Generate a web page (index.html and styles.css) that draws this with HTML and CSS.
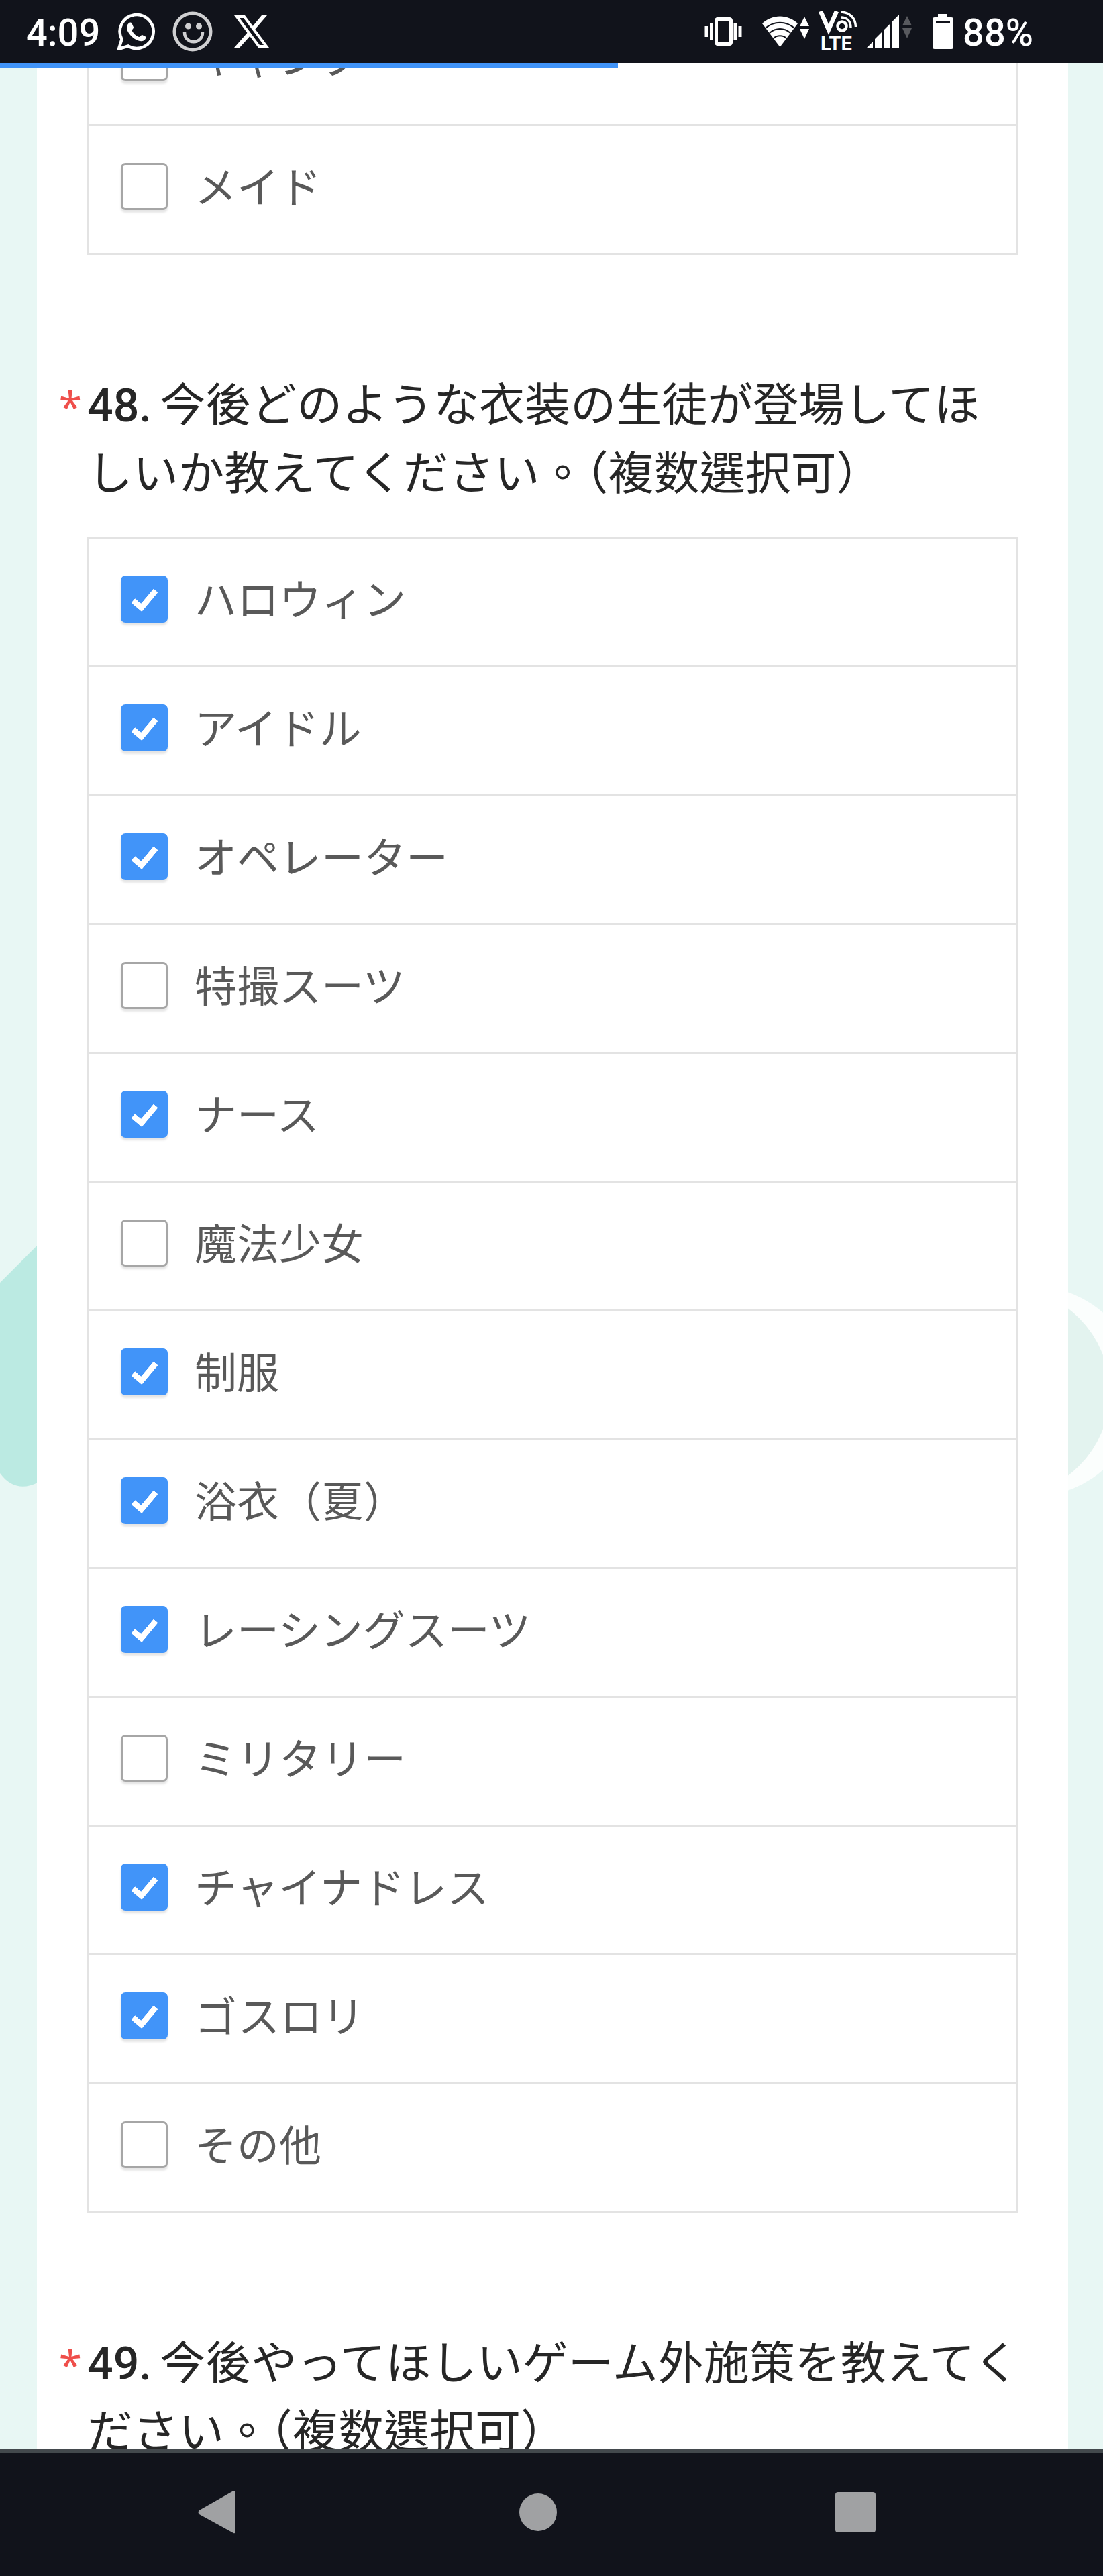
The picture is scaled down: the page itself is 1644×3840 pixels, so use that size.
FILE: index.html
```html
<!DOCTYPE html>
<html lang="ja">
<head>
  <meta charset="UTF-8" />
  <meta name="viewport" content="width=device-width, initial-scale=1.0"/>
  <title>アンケート</title>
  <link rel="stylesheet" href="styles.css">
</head>
<body>

  <header class="status-bar">
    <div class="status-left">
      <span class="clock">4:09</span>
      <svg class="icon-whatsapp" width="56" height="56" viewBox="0 0 56 56">
        <path d="M2 54 L6.500 39.500 A25 25 0 1 1 16 49.500 Z" fill="none" stroke="#fff" stroke-width="4.500"/>
        <path d="M18 15 C20 14 21.500 15 22 17 L24 21.500 C24.500 23 21.500 25.500 21.500 26.500 C24 31 27 34 32 36 C33.500 36.500 35.500 32.500 37 33 L42 35.500 C43 36.500 42 40 39 41.500 C34 43.500 27 40.500 22 36 C17 31 13.500 26 14 21 C14.500 17.500 16.500 15.500 18 15 Z" fill="#fff"/>
      </svg>
      <svg class="icon-smile" width="60" height="60" viewBox="0 0 60 60">
        <circle cx="30" cy="30" r="27" fill="none" stroke="#cfcfd1" stroke-width="5"/>
        <circle cx="23.500" cy="22" r="4.500" fill="#cfcfd1"/>
        <circle cx="39.500" cy="22" r="4.500" fill="#cfcfd1"/>
        <path d="M18 31 C18 50 45 50 45 31" fill="none" stroke="#cfcfd1" stroke-width="4.500"/>
      </svg>
      <svg class="icon-x" width="60" height="48" viewBox="0 0 60 48">
        <path d="M6 0 H22 L58 48 H42 Z M14 4 L44 44 H50 L20 4 Z" fill="#fff" fill-rule="evenodd"/>
        <path d="M47 0 H55 L36 22 L32 18 Z M6 48 H14 L32 28 L28 23 Z" fill="#fff"/>
      </svg>
    </div>
    <div class="status-right">
      <svg class="icon-vibrate" width="56" height="42" viewBox="0 0 56 42">
        <rect x="17.500" y="2.500" width="22" height="37" rx="2" fill="none" stroke="#fff" stroke-width="5"/>
        <path d="M3 13 V29 M10.500 8 V34 M46 8 V34 M53 13 V29" stroke="#fff" stroke-width="5"/>
      </svg>
      <svg class="icon-wifi" width="70" height="46" viewBox="0 0 70 46">
        <path d="M0 11 C15 -3 38 -3 53 11 L26.500 46 Z" fill="#fff"/>
        <path d="M5 18 C17 7 36 7 48 18 M11 25 C20 17 33 17 42 25 M17 33 C22 28 31 28 36 33" fill="none" stroke="#11131b" stroke-width="2"/>
        <path d="M63 1 L70 15 H56 Z M56 19 H70 L63 34 Z" fill="#fff"/>
      </svg>
      <svg class="icon-volte" width="58" height="62" viewBox="0 0 58 62">
        <path d="M3 1 L15 28 L27 1" fill="none" stroke="#fff" stroke-width="6.500"/>
        <circle cx="35" cy="23" r="6.500" fill="none" stroke="#fff" stroke-width="4.500"/>
        <path d="M33 10 C42 10 48 15 48 25 M34 2 C47 3 55 11 55.500 24" fill="none" stroke="#fff" stroke-width="3.500"/>
        <text class="lte" x="3" y="59">LTE</text>
      </svg>
      <svg class="icon-signal" width="68" height="50" viewBox="0 0 68 50">
        <path d="M0 49 L9 40 V49 Z M12 49 V36 L22 26 V49 Z M25 49 V23 L35 13 V49 Z M38 49 V10 L48 0 V49 Z" fill="#fff"/>
        <path d="M60 2 L67 16 H53 Z M53 20 H67 L60 35 Z" fill="#58595e"/>
      </svg>
      <svg class="icon-battery" width="31" height="52" viewBox="0 0 31 52">
        <path d="M8 0 H22 V5 H28 Q31 5 31 8 V49 Q31 52 28 52 H3 Q0 52 0 49 V8 Q0 5 3 5 H8 Z" fill="#fff"/>
        <rect x="5" y="11" width="21" height="3" fill="#11131b"/>
      </svg>
      <span class="battery-level">88%</span>
    </div>
  </header>

  <main class="page">
    <!-- background shapes at both sides of the sheet -->
    <svg class="shape shape-left" width="56" height="720" viewBox="0 0 56 720">
      <path d="M0 399 L56 343 V697 C36 707 16 705 0 683 Z" fill="#bbeae2"/>
    </svg>
    <svg class="shape shape-right" width="52" height="720" viewBox="0 0 52 720">
      <circle cx="-51" cy="561" r="156" fill="#fbfefd"/>
      <circle cx="-94" cy="562" r="156" fill="#e3f3ef"/>
    </svg>

    <div class="progress"><div class="progress-value" style="width: 56%"></div></div>

    <form class="sheet" lang="zh-Hant">
      <fieldset class="question question-scrolled">
        <div class="options">
          <label class="option"><input type="checkbox"><span>キャンプ</span></label>
          <label class="option"><input type="checkbox"><span>メイド</span></label>
        </div>
      </fieldset>

      <fieldset class="question">
        <legend class="title"><span class="required">*</span><b>48.</b>今後どのような衣装の生徒が登場してほ<br>しいか教えてください。（複数選択可）</legend>
        <div class="options">
          <label class="option"><input type="checkbox" checked><span>ハロウィン</span></label>
          <label class="option"><input type="checkbox" checked><span>アイドル</span></label>
          <label class="option"><input type="checkbox" checked><span>オペレーター</span></label>
          <label class="option"><input type="checkbox"><span>特撮スーツ</span></label>
          <label class="option"><input type="checkbox" checked><span>ナース</span></label>
          <label class="option"><input type="checkbox"><span>魔法少女</span></label>
          <label class="option"><input type="checkbox" checked><span>制服</span></label>
          <label class="option"><input type="checkbox" checked><span>浴衣（夏）</span></label>
          <label class="option"><input type="checkbox" checked><span>レーシングスーツ</span></label>
          <label class="option"><input type="checkbox"><span>ミリタリー</span></label>
          <label class="option"><input type="checkbox" checked><span>チャイナドレス</span></label>
          <label class="option"><input type="checkbox" checked><span>ゴスロリ</span></label>
          <label class="option"><input type="checkbox"><span>その他</span></label>
        </div>
      </fieldset>

      <fieldset class="question">
        <legend class="title"><span class="required">*</span><b>49.</b>今後やってほしいゲーム外施策を教えてください。（複数選択可）</legend>
      </fieldset>
    </form>
  </main>

  <nav class="nav-bar">
    <button type="button" aria-label="戻る">
      <svg width="64" height="64" viewBox="0 0 64 64"><path d="M57 0 Q60 0 60 3 V61 Q60 64 57 63 L6 35 Q3 32 6 29 Z" fill="#a0a1a3"/></svg>
    </button>
    <button type="button" aria-label="ホーム">
      <svg width="64" height="64" viewBox="0 0 64 64"><circle cx="35" cy="32" r="28" fill="#a0a1a3"/></svg>
    </button>
    <button type="button" aria-label="アプリ履歴">
      <svg width="64" height="64" viewBox="0 0 64 64"><rect x="2" y="2" width="60" height="60" rx="4" fill="#a0a1a3"/></svg>
    </button>
  </nav>

</body>
</html>
```
FILE: styles.css
```css
* {
  box-sizing: border-box;
  margin: 0;
  padding: 0;
}

body {
  display: flex;
  flex-direction: column;
  height: 100vh;
  overflow: hidden;
  background: #e8f7f4;
  font-family: Roboto, "Noto Sans CJK TC", sans-serif;
}

svg {
  display: block;
}

/* Status bar */
.status-bar {
  display: flex;
  flex-shrink: 0;
  justify-content: space-between;
  align-items: center;
  height: 94px;
  padding: 0 104px 0 39px;
  background: #11131b;
  color: #fff;
  font-size: 56px;
  font-weight: 500;
  line-height: 94px;
}

.status-left,
.status-right {
  display: flex;
  align-items: center;
}

.status-left {
  gap: 26px;
}

.clock {
  padding-top: 4px;
}

.status-right {
  gap: 14px;
}

.icon-vibrate {
  margin-right: 16px;
}

.icon-signal {
  margin-right: 16px;
}

.battery-level {
  padding-top: 4px;
}

.lte {
  font-size: 29px;
  font-weight: 700;
  fill: #fff;
}

/* Page */
.page {
  position: relative;
  flex: 1;
  min-height: 0;
  overflow: hidden;
}

.shape {
  position: absolute;
  top: 50%;
  transform: translateY(-50%);
}

.shape-left {
  left: 0;
}

.shape-right {
  right: 0;
}

.progress {
  position: absolute;
  top: 0;
  left: 0;
  right: 0;
  height: 8px;
  z-index: 1;
}

.progress-value {
  height: 8px;
  background: #4194f9;
}

.sheet {
  position: relative;
  min-height: 100%;
  margin: 0 52px 0 55px;
  padding: 0 75px;
  background: #fff;
}

.question {
  border: none;
  min-width: 0;
  margin-bottom: 174px;
}

.question-scrolled {
  margin-top: -101px;
}

.title {
  position: relative;
  width: calc(100% + 24px);
  margin-bottom: 42px;
  color: #262626;
  font-size: 68px;
  line-height: 102px;
}

.title b {
  margin-right: 12px;
  font-weight: 500;
}

.required {
  position: absolute;
  right: 100%;
  margin-right: 8px;
  color: #ef4f4b;
  font-family: "Noto Sans", sans-serif;
  font-size: 62px;
}

.options {
  border: 3px solid #e3e3e3;
  background: #fff;
}

.option {
  display: flex;
  align-items: center;
  gap: 40px;
  height: 192px;
  padding: 0 47px 10px;
  border-bottom: 3px solid #e3e3e3;
  color: #595959;
  font-size: 63px;
}

.option span {
  padding-bottom: 6px;
}

.option:last-child {
  height: 189px;
  border-bottom: none;
}

.option input {
  appearance: none;
  flex-shrink: 0;
  width: 70px;
  height: 70px;
  border: 3px solid #a6a6a6;
  border-radius: 7px;
  background: #fff;
  box-shadow: 0 4px 3px rgba(0, 0, 0, 0.1);
}

.option input:checked {
  border-color: #4194f9;
  background: #4194f9;
}

.option input:checked::before {
  content: "";
  display: block;
  box-sizing: border-box;
  width: 21px;
  height: 38px;
  margin: 11px 0 0 22px;
  border: solid #fff;
  border-width: 0 9px 9px 0;
  border-radius: 2px;
  transform: rotate(40deg);
}

/* Navigation bar */
.nav-bar {
  display: flex;
  flex-shrink: 0;
  justify-content: space-between;
  align-items: center;
  height: 189px;
  padding: 0 309px 7px 263px;
  border-top: 5px solid #43494d;
  background: #11131b;
}

.nav-bar button {
  display: flex;
  justify-content: center;
  width: 120px;
  border: none;
  background: none;
  cursor: pointer;
}
```
